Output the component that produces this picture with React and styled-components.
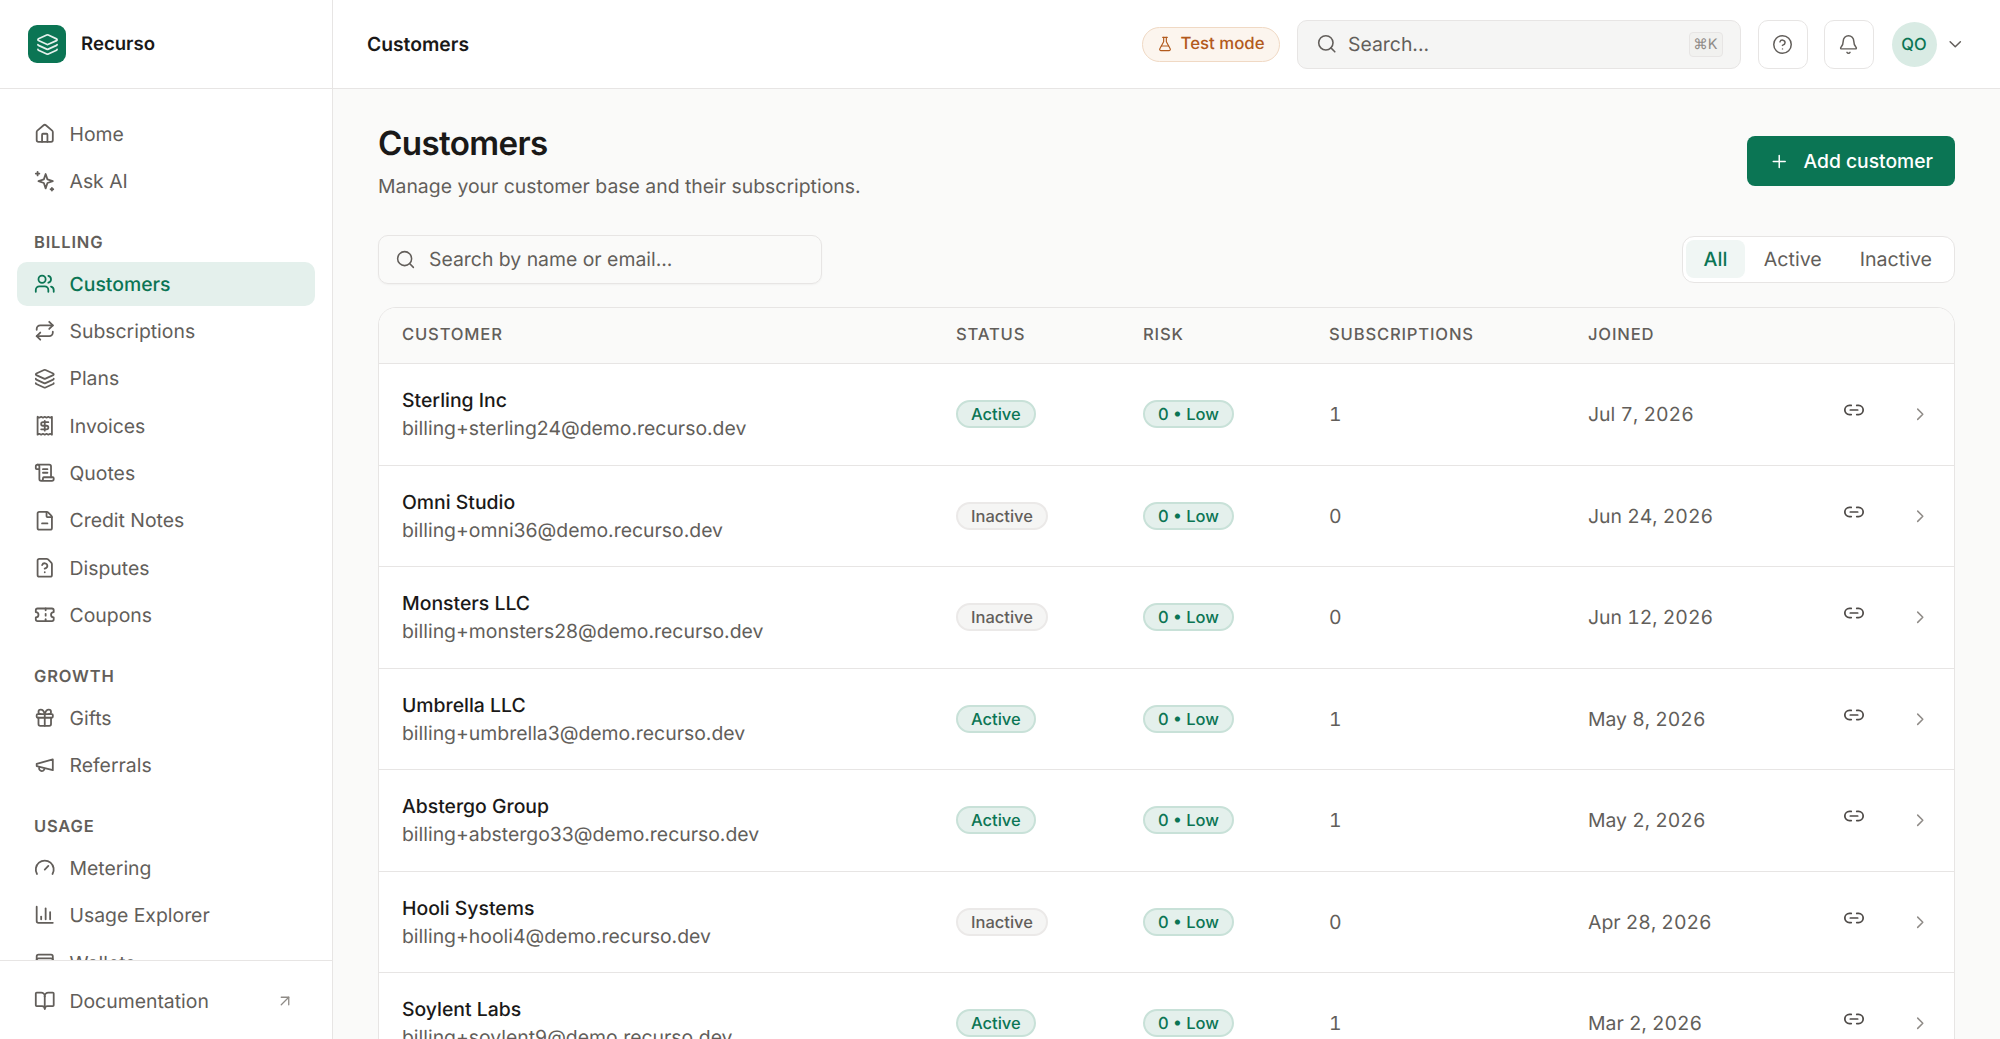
import React from 'react';
import styled, { createGlobalStyle } from 'styled-components';
import {
  House, Users, Repeat, Layers, Receipt, ScrollText, FileMinus, FileQuestion, Ticket,
  Gift, Gauge, ChartColumn, WalletCards, BookOpen, ArrowUpRight, FlaskConical, Search,
  CircleHelp, Bell, ChevronDown, ChevronRight, Plus, Link2,
} from 'lucide-react';

const GlobalStyle = createGlobalStyle`
  html, body { margin: 0; padding: 0; height: 100%; overflow: hidden; }
  body {
    font-family: Inter, "Liberation Sans", sans-serif;
    font-size: 19.4px;
    color: #1c1917;
    background: #fafaf9;
    text-rendering: geometricPrecision;
  }
  * { box-sizing: border-box; }
`;

const green = '#0b7554';
const muted = '#625e5a';
const line = '#e7e5e4';

const Shell = styled.div`
  display: grid;
  grid-template-columns: 333px 1fr;
  height: 100vh;
  overflow: hidden;
`;

const Sidebar = styled.aside`
  display: flex;
  flex-direction: column;
  height: 1039px;
  background: #fff;
  border-right: 1.5px solid ${line};
`;

const Brand = styled.div`
  display: flex;
  align-items: center;
  gap: 15px;
  height: 89px;
  flex: none;
  padding-left: 28px;
  border-bottom: 1.5px solid ${line};
  font-size: 18.6px;
  font-weight: 600;
  color: #1a1918;
`;

const LogoMark = styled.div`
  display: flex;
  align-items: center;
  justify-content: center;
  width: 38px;
  height: 38px;
  border-radius: 9px;
  background: ${green};
  color: #e4f0ec;
`;

const NavScroll = styled.nav`
  flex: 1;
  overflow: hidden;
  padding: 22.6px 17px 0;
`;

const NavGroup = styled.div`
  display: flex;
  flex-direction: column;
  gap: 3.3px;
  margin-bottom: 26.8px;
`;

const GroupLabel = styled.div`
  height: 24px;
  margin-bottom: 4.8px;
  padding-left: 17px;
  font-size: 16.5px;
  line-height: 24px;
  font-weight: 600;
  letter-spacing: 0.05em;
  color: ${muted};
`;

const NavItem = styled.a`
  display: flex;
  align-items: center;
  gap: 14px;
  flex: none;
  height: 44px;
  padding: 0 17px;
  border-radius: 10px;
  font-size: 19.4px;
  font-weight: ${(p) => (p.$active ? 500 : 400)};
  color: ${(p) => (p.$active ? green : muted)};
  background: ${(p) => (p.$active ? '#e4f0ec' : 'transparent')};
`;

const SideFooter = styled.div`
  flex: none;
  height: 79px;
  padding: 18px 17px 0;
  border-top: 1.5px solid ${line};
`;

const DocLink = styled(NavItem)`
  svg:last-child { margin-left: auto; margin-right: 4px; color: #8f8b87; }
`;

const Main = styled.div`
  display: flex;
  flex-direction: column;
  height: 1039px;
  min-width: 0;
`;

const TopBar = styled.header`
  display: flex;
  align-items: center;
  flex: none;
  height: 89px;
  padding: 0 35px 0 34px;
  background: #fff;
  border-bottom: 1.5px solid ${line};
`;

const TopTitle = styled.div`
  margin-right: auto;
  font-size: 19.3px;
  font-weight: 600;
  color: #1a1918;
`;

const TestPill = styled.div`
  display: flex;
  align-items: center;
  gap: 8px;
  height: 35px;
  padding: 0 14px;
  margin-right: 17px;
  border-radius: 18px;
  border: 1.5px solid #f0d9c4;
  background: #fcf5ee;
  color: #b25a1c;
  font-size: 16.8px;
  font-weight: 500;
`;

const TopSearch = styled.div`
  display: flex;
  align-items: center;
  gap: 11px;
  width: 444px;
  height: 49px;
  padding: 0 18px;
  margin-right: 17px;
  border-radius: 10px;
  border: 1.5px solid ${line};
  background: #f5f5f4;
  color: ${muted};
  font-size: 19.4px;
`;

const Kbd = styled.span`
  display: flex;
  align-items: center;
  justify-content: center;
  width: 34px;
  height: 25px;
  margin-left: auto;
  margin-right: -1px;
  border-radius: 4px;
  border: 1px solid ${line};
  background: #f1f1ef;
  font-size: 14.5px;
  color: #8f8b87;
`;

const IconBtn = styled.div`
  display: flex;
  align-items: center;
  justify-content: center;
  width: 50px;
  height: 49px;
  margin-right: 16px;
  border-radius: 10px;
  border: 1.5px solid ${line};
  background: #fff;
  color: ${muted};
`;

const Avatar = styled.div`
  display: flex;
  align-items: center;
  justify-content: center;
  width: 45px;
  height: 45px;
  margin-left: 2px;
  border-radius: 50%;
  background: #d9ebe4;
  color: ${green};
  font-size: 16.5px;
  font-weight: 500;
`;

const UserCaret = styled.div`
  display: flex;
  margin-left: 8px;
  color: ${muted};
`;

const Content = styled.main`
  flex: 1;
  overflow: hidden;
  padding: 30px 45px 0;
`;

const TitleRow = styled.div`
  display: flex;
  justify-content: space-between;
  align-items: flex-start;
  margin-bottom: 34.6px;
`;

const PageTitle = styled.h1`
  margin: 0;
  font-size: 33.2px;
  line-height: 50px;
  font-weight: 600;
  letter-spacing: -0.02em;
  color: #1a1918;
`;

const Subtitle = styled.p`
  margin: 4px 0 0;
  font-size: 19.4px;
  line-height: 27px;
  color: ${muted};
`;

const AddButton = styled.button`
  display: flex;
  align-items: center;
  gap: 14px;
  width: 208px;
  height: 50px;
  margin-top: 17px;
  padding: 0 22px;
  border: none;
  border-radius: 8px;
  background: ${green};
  color: #fff;
  font-family: inherit;
  font-size: 19.3px;
  font-weight: 500;
  white-space: nowrap;
`;

const FilterRow = styled.div`
  display: flex;
  justify-content: space-between;
  align-items: center;
  margin-bottom: 23.5px;
`;

const TableSearch = styled.div`
  display: flex;
  align-items: center;
  gap: 13px;
  width: 444px;
  height: 49px;
  padding: 0 16px;
  border-radius: 10px;
  border: 1.5px solid ${line};
  box-shadow: 0 1px 2px rgba(0, 0, 0, 0.04);
  color: ${muted};
  font-size: 19.4px;
`;

const Tabs = styled.div`
  display: flex;
  align-items: center;
  height: 47px;
  padding: 0 3px;
  border-radius: 12px;
  border: 1.5px solid ${line};
  background: #fff;
`;

const Tab = styled.div`
  display: flex;
  align-items: center;
  justify-content: center;
  height: 38px;
  padding: 0 ${(p) => (p.$active ? 17.5 : 19)}px;
  border-radius: 8px;
  font-size: 19.6px;
  font-weight: ${(p) => (p.$active ? 500 : 400)};
  color: ${(p) => (p.$active ? green : muted)};
  background: ${(p) => (p.$active ? '#f0f6f4' : 'transparent')};
`;

const TableCard = styled.div`
  background: #fff;
  border: 1.5px solid ${line};
  border-radius: 18px;
  overflow: hidden;
`;

const columns = '554px 187px 186px 259px 1fr';

const HeadRow = styled.div`
  display: grid;
  grid-template-columns: ${columns};
  align-items: center;
  height: 56px;
  padding: 0 0 1px 23px;
  background: #fafaf9;
  border-bottom: 1.5px solid ${line};
  font-size: 16.6px;
  font-weight: 500;
  letter-spacing: 0.05em;
  color: ${muted};
`;

const Row = styled.div`
  display: grid;
  grid-template-columns: ${columns};
  align-items: center;
  flex: none;
  height: 101.5px;
  padding-left: 23px;
  border-bottom: 1.5px solid ${line};
  font-size: 19.4px;
  color: ${muted};
`;

const Name = styled.div`
  font-size: 19.4px;
  line-height: 28px;
  font-weight: 500;
  color: #1a1918;
`;

const Email = styled.div`
  font-size: 19.4px;
  line-height: 28px;
  color: ${muted};
`;

const Badge = styled.span`
  display: inline-flex;
  align-items: center;
  height: 28px;
  padding: 0 13px;
  border-radius: 14px;
  font-size: 16.5px;
  font-weight: 500;
  border: 2px solid ${(p) => (p.$on ? '#c8e1d8' : '#ebe9e8')};
  background: ${(p) => (p.$on ? '#e4f0ec' : '#f5f5f4')};
  color: ${(p) => (p.$on ? green : muted)};
`;

const SubsCell = styled.div`
  font-variant-numeric: tabular-nums;
`;

const JoinedCell = styled.div`
  display: flex;
  align-items: center;
  justify-content: space-between;
  font-variant-numeric: tabular-nums;
`;

const Actions = styled.div`
  display: flex;
  align-items: center;
  justify-content: flex-end;
  gap: 45px;
  padding-right: 24px;
`;

const LinkBtn = styled.span`
  display: flex;
  margin-bottom: 8px;
  color: #4f4b48;
`;

const Caret = styled.span`
  display: flex;
  color: #8f8b87;
`;

function AskIcon({ size }) {
  return (
    <svg width={size} height={size} viewBox="0 0 24 24" fill="none" stroke="currentColor" strokeWidth="2" strokeLinecap="round" strokeLinejoin="round">
      <path d="M13 4.500l2 6 6 2-6 2-2 6-2-6-6-2 6-2z" />
      <path d="M4 2v4M2 4h4M20 20v3M18.500 21.500h3" />
    </svg>
  );
}

function MegaphoneIcon({ size }) {
  return (
    <svg width={size} height={size} viewBox="0 0 24 24" fill="none" stroke="currentColor" strokeWidth="2" strokeLinecap="round" strokeLinejoin="round">
      <path d="m3 11 18-5v12L3 13.500z" />
      <path d="M11.600 16.800a3 3 0 1 1-5.800-1.600" />
    </svg>
  );
}

const navGroups = [
  {
    items: [
      ['Home', House],
      ['Ask AI', AskIcon],
    ],
  },
  {
    label: 'BILLING',
    items: [
      ['Customers', Users],
      ['Subscriptions', Repeat],
      ['Plans', Layers],
      ['Invoices', Receipt],
      ['Quotes', ScrollText],
      ['Credit Notes', FileMinus],
      ['Disputes', FileQuestion],
      ['Coupons', Ticket],
    ],
  },
  {
    label: 'GROWTH',
    items: [
      ['Gifts', Gift],
      ['Referrals', MegaphoneIcon],
    ],
  },
  {
    label: 'USAGE',
    items: [
      ['Metering', Gauge],
      ['Usage Explorer', ChartColumn],
      ['Wallets', WalletCards],
    ],
  },
];

const customers = [
  ['Sterling Inc', 'billing+sterling24@demo.recurso.dev', true, 1, 'Jul 7, 2026'],
  ['Omni Studio', 'billing+omni36@demo.recurso.dev', false, 0, 'Jun 24, 2026'],
  ['Monsters LLC', 'billing+monsters28@demo.recurso.dev', false, 0, 'Jun 12, 2026'],
  ['Umbrella LLC', 'billing+umbrella3@demo.recurso.dev', true, 1, 'May 8, 2026'],
  ['Abstergo Group', 'billing+abstergo33@demo.recurso.dev', true, 1, 'May 2, 2026'],
  ['Hooli Systems', 'billing+hooli4@demo.recurso.dev', false, 0, 'Apr 28, 2026'],
  ['Soylent Labs', 'billing+soylent9@demo.recurso.dev', true, 1, 'Mar 2, 2026'],
];

export default function App() {
  return (
    <Shell>
      <GlobalStyle />
      <Sidebar>
        <Brand>
          <LogoMark>
            <Layers size={23} strokeWidth={1.8} />
          </LogoMark>
          Recurso
        </Brand>
        <NavScroll>
          {navGroups.map((group, i) => (
            <NavGroup key={i}>
              {group.label && <GroupLabel>{group.label}</GroupLabel>}
              {group.items.map(([label, Icon]) => (
                <NavItem key={label} $active={label === 'Customers'}>
                  <Icon size={21.5} />
                  {label}
                </NavItem>
              ))}
            </NavGroup>
          ))}
        </NavScroll>
        <SideFooter>
          <DocLink>
            <BookOpen size={21.5} />
            Documentation
            <ArrowUpRight size={18} strokeWidth={1.75} />
          </DocLink>
        </SideFooter>
      </Sidebar>
      <Main>
        <TopBar>
          <TopTitle>Customers</TopTitle>
          <TestPill>
            <FlaskConical size={16} strokeWidth={1.75} />
            Test mode
          </TestPill>
          <TopSearch>
            <Search size={21.5} strokeWidth={1.75} />
            Search...
            <Kbd>⌘K</Kbd>
          </TopSearch>
          <IconBtn>
            <CircleHelp size={21} strokeWidth={1.7} />
          </IconBtn>
          <IconBtn>
            <Bell size={21} strokeWidth={1.7} />
          </IconBtn>
          <Avatar>QO</Avatar>
          <UserCaret>
            <ChevronDown size={20.5} strokeWidth={1.75} />
          </UserCaret>
        </TopBar>
        <Content>
          <TitleRow>
            <div>
              <PageTitle>Customers</PageTitle>
              <Subtitle>Manage your customer base and their subscriptions.</Subtitle>
            </div>
            <AddButton>
              <Plus size={21} strokeWidth={1.75} />
              Add customer
            </AddButton>
          </TitleRow>
          <FilterRow>
            <TableSearch>
              <Search size={21} strokeWidth={1.75} />
              Search by name or email...
            </TableSearch>
            <Tabs>
              <Tab $active>All</Tab>
              <Tab>Active</Tab>
              <Tab>Inactive</Tab>
            </Tabs>
          </FilterRow>
          <TableCard>
            <HeadRow>
              <div>CUSTOMER</div>
              <div>STATUS</div>
              <div>RISK</div>
              <div>SUBSCRIPTIONS</div>
              <div>JOINED</div>
            </HeadRow>
            {customers.map(([name, email, active, subs, joined]) => (
              <Row key={email}>
                <div>
                  <Name>{name}</Name>
                  <Email>{email}</Email>
                </div>
                <div>
                  <Badge $on={active}>{active ? 'Active' : 'Inactive'}</Badge>
                </div>
                <div>
                  <Badge $on>0 • Low</Badge>
                </div>
                <SubsCell>{subs}</SubsCell>
                <JoinedCell>
                  {joined}
                  <Actions>
                    <LinkBtn>
                      <Link2 size={22} strokeWidth={1.9} />
                    </LinkBtn>
                    <Caret>
                      <ChevronRight size={20.5} strokeWidth={1.75} />
                    </Caret>
                  </Actions>
                </JoinedCell>
              </Row>
            ))}
          </TableCard>
        </Content>
      </Main>
    </Shell>
  );
}
